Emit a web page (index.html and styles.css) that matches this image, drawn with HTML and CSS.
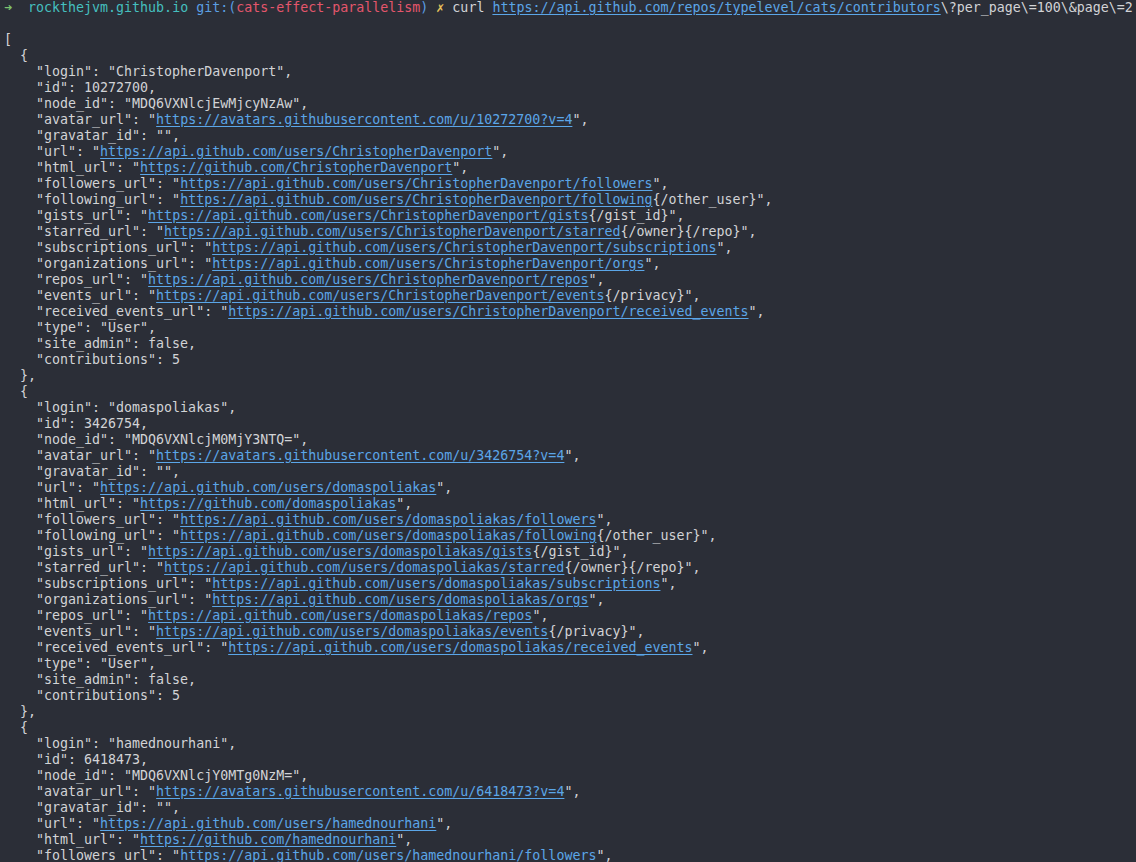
FILE: index.html
```html
<!DOCTYPE html>
<html lang="en">
<head>
  <meta charset="UTF-8" />
  <meta name="viewport" content="width=device-width, initial-scale=1.0"/>
  <title>Terminal</title>
  <link rel="stylesheet" href="styles.css">
</head>
<body>
<pre class="term"><span class="arrow">➜</span>  <span class="dir">rockthejvm.github.io</span> <span class="git">git:(</span><span class="branch">cats-effect-parallelism</span><span class="git">)</span> <span class="dirty">✗</span> curl <span class="link">https://api.github.com/repos/typelevel/cats/contributors</span>\?per_page\=100\&amp;page\=2

[
  {
    "login": "ChristopherDavenport",
    "id": 10272700,
    "node_id": "MDQ6VXNlcjEwMjcyNzAw",
    "avatar_url": "<span class="link">https://avatars.githubusercontent.com/u/10272700?v=4</span>",
    "gravatar_id": "",
    "url": "<span class="link">https://api.github.com/users/ChristopherDavenport</span>",
    "html_url": "<span class="link">https://github.com/ChristopherDavenport</span>",
    "followers_url": "<span class="link">https://api.github.com/users/ChristopherDavenport/followers</span>",
    "following_url": "<span class="link">https://api.github.com/users/ChristopherDavenport/following</span>{/other_user}",
    "gists_url": "<span class="link">https://api.github.com/users/ChristopherDavenport/gists</span>{/gist_id}",
    "starred_url": "<span class="link">https://api.github.com/users/ChristopherDavenport/starred</span>{/owner}{/repo}",
    "subscriptions_url": "<span class="link">https://api.github.com/users/ChristopherDavenport/subscriptions</span>",
    "organizations_url": "<span class="link">https://api.github.com/users/ChristopherDavenport/orgs</span>",
    "repos_url": "<span class="link">https://api.github.com/users/ChristopherDavenport/repos</span>",
    "events_url": "<span class="link">https://api.github.com/users/ChristopherDavenport/events</span>{/privacy}",
    "received_events_url": "<span class="link">https://api.github.com/users/ChristopherDavenport/received_events</span>",
    "type": "User",
    "site_admin": false,
    "contributions": 5
  },
  {
    "login": "domaspoliakas",
    "id": 3426754,
    "node_id": "MDQ6VXNlcjM0MjY3NTQ=",
    "avatar_url": "<span class="link">https://avatars.githubusercontent.com/u/3426754?v=4</span>",
    "gravatar_id": "",
    "url": "<span class="link">https://api.github.com/users/domaspoliakas</span>",
    "html_url": "<span class="link">https://github.com/domaspoliakas</span>",
    "followers_url": "<span class="link">https://api.github.com/users/domaspoliakas/followers</span>",
    "following_url": "<span class="link">https://api.github.com/users/domaspoliakas/following</span>{/other_user}",
    "gists_url": "<span class="link">https://api.github.com/users/domaspoliakas/gists</span>{/gist_id}",
    "starred_url": "<span class="link">https://api.github.com/users/domaspoliakas/starred</span>{/owner}{/repo}",
    "subscriptions_url": "<span class="link">https://api.github.com/users/domaspoliakas/subscriptions</span>",
    "organizations_url": "<span class="link">https://api.github.com/users/domaspoliakas/orgs</span>",
    "repos_url": "<span class="link">https://api.github.com/users/domaspoliakas/repos</span>",
    "events_url": "<span class="link">https://api.github.com/users/domaspoliakas/events</span>{/privacy}",
    "received_events_url": "<span class="link">https://api.github.com/users/domaspoliakas/received_events</span>",
    "type": "User",
    "site_admin": false,
    "contributions": 5
  },
  {
    "login": "hamednourhani",
    "id": 6418473,
    "node_id": "MDQ6VXNlcjY0MTg0NzM=",
    "avatar_url": "<span class="link">https://avatars.githubusercontent.com/u/6418473?v=4</span>",
    "gravatar_id": "",
    "url": "<span class="link">https://api.github.com/users/hamednourhani</span>",
    "html_url": "<span class="link">https://github.com/hamednourhani</span>",
    "followers_url": "<span class="link">https://api.github.com/users/hamednourhani/followers</span>",
</pre>
</body>
</html>
```

FILE: styles.css
```css
html, body {
  margin: 0;
  height: 100%;
  overflow: hidden;
}
body {
  background: #2b2e37;
  color: #d2d3d6;
}
.term {
  margin: 0;
  padding: 0 4px;
  font-family: "DejaVu Sans Mono", "Liberation Mono", monospace;
  font-size: 13.3px;
  line-height: 16px;
  white-space: pre;
}
.arrow {
  color: #7cc36e;
}
.dir {
  color: #45bfbf;
}
.git {
  color: #5b9fe3;
}
.branch {
  color: #e4566c;
}
.dirty {
  color: #e6c35c;
}
.link {
  color: #5ba6e8;
  text-decoration: underline;
  text-underline-offset: 2px;
}
```
